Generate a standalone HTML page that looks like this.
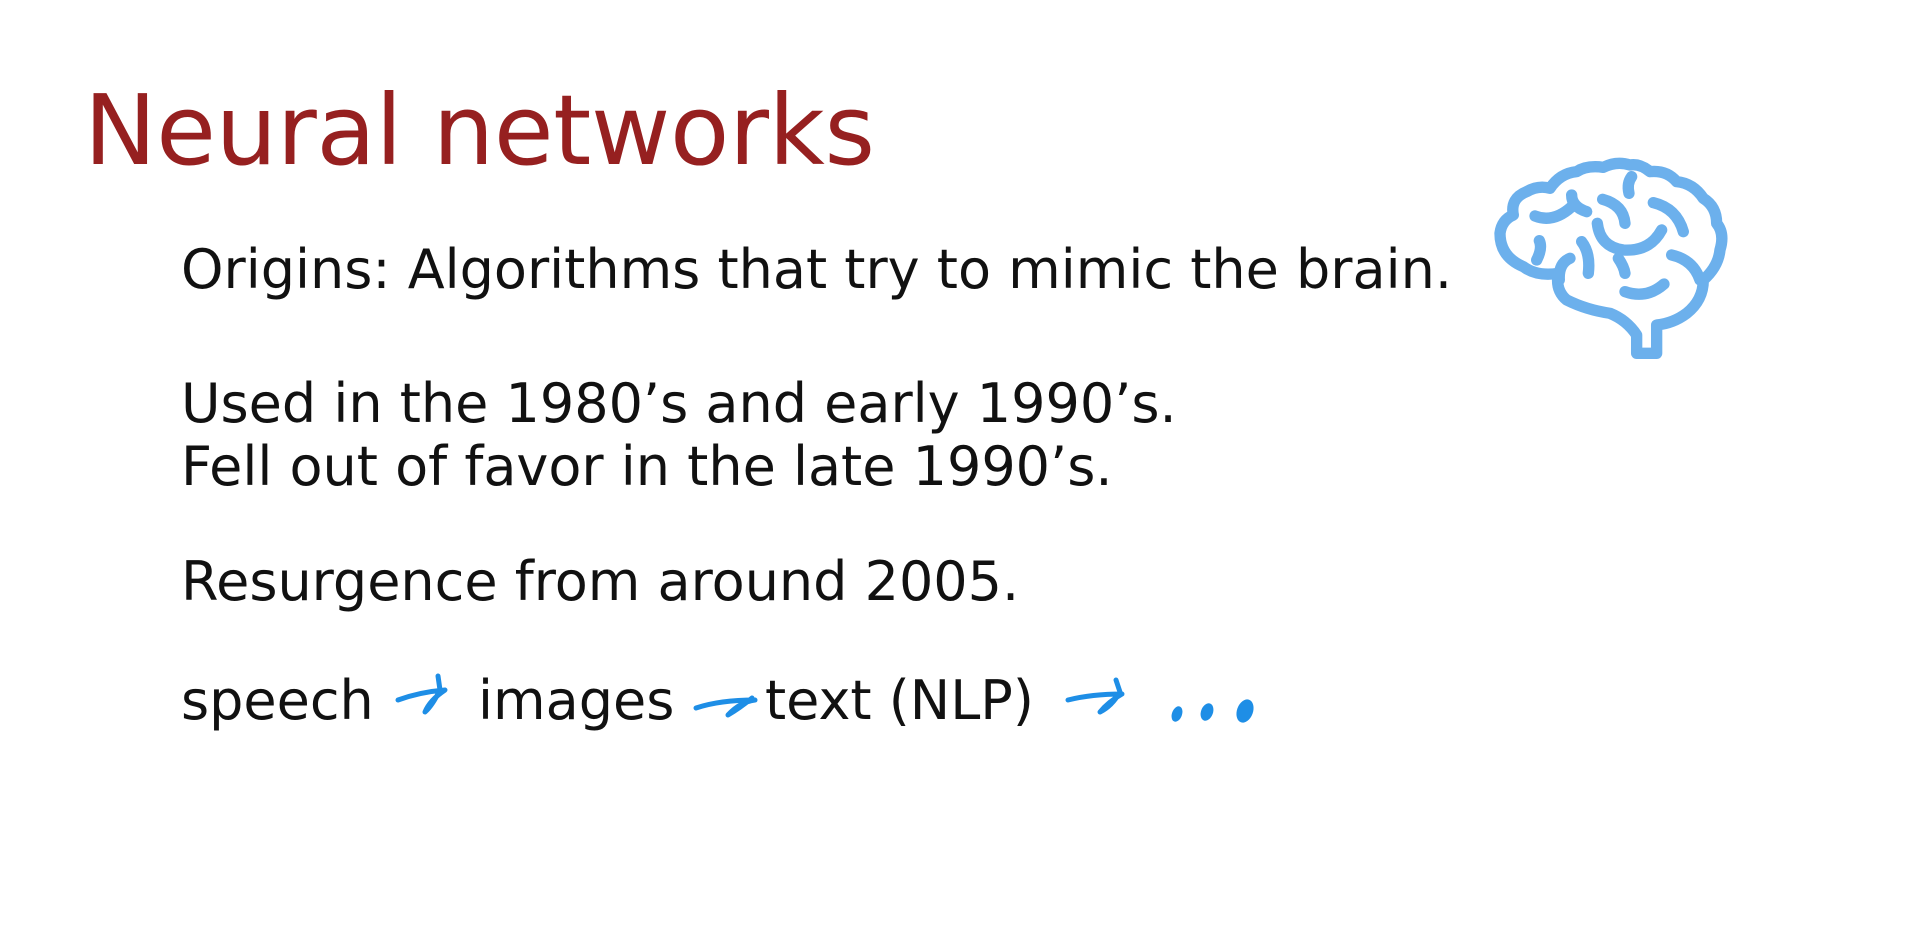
<!DOCTYPE html>
<html><head><meta charset="utf-8"><style>
html,body{margin:0;padding:0;background:#fff;width:1920px;height:952px;overflow:hidden;}
.t{position:absolute;font-family:"DejaVu Sans","Liberation Sans",sans-serif;white-space:nowrap;line-height:1;}
h1{position:absolute;left:84px;top:82px;margin:0;font-family:"DejaVu Sans","Liberation Sans",sans-serif;font-weight:normal;font-size:97px;color:#962020;line-height:1;letter-spacing:-0.3px;}
.b{font-size:54px;color:#111;left:181px;}
</style></head><body>
<h1>Neural networks</h1>
<div class="t b" style="top:243px">Origins: Algorithms that try to mimic the brain.</div>
<div class="t b" style="top:377px">Used in the 1980’s and early 1990’s.</div>
<div class="t b" style="top:440px">Fell out of favor in the late 1990’s.</div>
<div class="t b" style="top:555px">Resurgence from around 2005.</div>
<div class="t b" style="top:674px">speech</div>
<div class="t b" style="top:674px;left:478px">images</div>
<div class="t b" style="top:674px;left:765px">text (NLP)</div>
<svg style="position:absolute;left:0;top:0" width="1920" height="952">
<g fill="none" stroke="#1e8ee6" stroke-width="5" stroke-linecap="round" stroke-linejoin="round">
<path d="M398 700 Q420 692 445 690 Q430 700 425 712 Q432 706 440 690 L438 676"/>
<path d="M696 708 Q720 700 755 700 Q740 702 728 715 Q740 708 752 698"/>
<path d="M1068 700 Q1092 694 1122 694 Q1108 702 1100 712 Q1112 706 1120 692 L1116 680"/>
</g>
<g fill="#1e8ee6">
<ellipse cx="1177" cy="714" rx="5" ry="8" transform="rotate(20 1177 714)"/>
<ellipse cx="1207" cy="712" rx="6" ry="9" transform="rotate(20 1207 712)"/>
<ellipse cx="1245" cy="711" rx="8" ry="12" transform="rotate(20 1245 711)"/>
</g>
<g fill="none" stroke="#6cb0ec" stroke-width="34" stroke-linecap="round" stroke-linejoin="round" transform="translate(1470,140) scale(0.3333)">
<path d="M500 640 L500 585 Q470 540 420 520 Q350 510 290 480 Q255 450 265 400 Q200 410 160 380 Q90 350 90 280 Q95 240 130 225 Q120 175 170 155 Q205 135 240 145 Q270 100 320 95 Q350 75 400 82 Q440 62 480 75 Q510 70 540 95 Q590 90 620 125 Q670 130 700 175 Q740 200 740 250 Q765 280 750 330 Q745 380 700 420 Q700 480 650 520 Q610 550 560 555 L560 640 Z"/>
<path d="M195 228 Q250 250 305 200"/>
<path d="M305 165 Q305 200 350 215"/>
<path d="M398 178 Q460 195 465 250"/>
<path d="M550 188 Q620 205 640 275"/>
<path d="M485 110 Q470 130 477 160"/>
<path d="M382 250 Q390 320 460 330 Q540 335 575 270"/>
<path d="M208 302 Q218 325 200 360"/>
<path d="M335 305 Q362 340 355 400"/>
<path d="M300 355 Q265 370 268 420"/>
<path d="M445 355 Q462 380 465 400"/>
<path d="M605 345 Q670 360 690 420"/>
<path d="M465 455 Q530 478 582 432"/>
</g>
</svg>
</body></html>
